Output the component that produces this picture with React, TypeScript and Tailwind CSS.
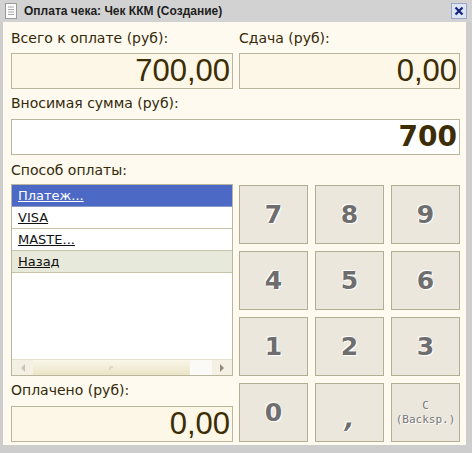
import React from "react";

const labelCls = "text-[14px] leading-[16px] text-[#33290a] font-['DejaVu_Sans',Verdana,sans-serif]";
const boxCls =
  "h-[36px] border border-[#bab59d] bg-[#fcf7e6] flex items-center justify-end pr-[2px] text-[#3c2d06] text-[31px] font-['Liberation_Sans',Arial,sans-serif]";

const methods = [
  { name: "Платеж...", selected: true },
  { name: "VISA" },
  { name: "MASTE..." },
  { name: "Назад", back: true },
];

const keys = ["7", "8", "9", "4", "5", "6", "1", "2", "3", "0", ","];

function DocIcon() {
  return (
    <svg width="14" height="16" viewBox="0 0 14 16">
      <rect x="1.5" y="0.5" width="11" height="15" fill="#fbfbfb" stroke="#9a9a9a" />
      <line x1="4" y1="4" x2="10" y2="4" stroke="#a8a8a8" />
      <line x1="4" y1="6.5" x2="10" y2="6.5" stroke="#a8a8a8" />
      <line x1="4" y1="9" x2="10" y2="9" stroke="#a8a8a8" />
      <line x1="4" y1="11.5" x2="10" y2="11.5" stroke="#a8a8a8" />
    </svg>
  );
}

function PaymentList() {
  return (
    <div className="h-[192px] border border-[#bab59d] bg-white flex flex-col">
      <div className="flex-1">
        {methods.map(m => (
          <div
            key={m.name}
            className={`h-[22px] flex items-center px-[6px] border-b text-[13px] underline font-['DejaVu_Sans',Verdana,sans-serif] ${
              m.selected
                ? "bg-[#4c69c6] text-white border-[#8a99c8]"
                : m.back
                ? "bg-[#e7eadb] text-[#111] border-[#c8c4ab]"
                : "bg-white text-[#111] border-[#c8c4ab]"
            }`}
          >
            {m.name}
          </div>
        ))}
      </div>
      {/* horizontal scrollbar */}
      <div className="h-[16px] flex bg-[#f4f1e4] border-t border-[#e4e0cc]">
        <div className="w-[21px] flex items-center justify-center">
          <svg width="6" height="8" viewBox="0 0 6 8">
            <path d="M5 0 L1 4 L5 8 Z" fill="#c9c5b6" />
          </svg>
        </div>
        <div className="w-[157px] bg-gradient-to-b from-[#faf7ea] to-[#ebe4c6] flex items-center justify-center">
          <svg width="6" height="6" viewBox="0 0 6 6">
            <path d="M1 5 L1 2 L4 2" stroke="#cdc7af" fill="none" />
          </svg>
        </div>
        <div className="flex-1 bg-[#fbfaf6]" />
        <div className="w-[20px] flex items-center justify-center">
          <svg width="6" height="8" viewBox="0 0 6 8">
            <path d="M1 0 L5 4 L1 8 Z" fill="#8f8b7e" />
          </svg>
        </div>
      </div>
    </div>
  );
}

function Keypad() {
  return (
    <div className="mt-[1px] grid grid-cols-3 grid-rows-4 gap-[7px] h-[257px]">
      {keys.map(k => (
        <button
          key={k}
          className="border border-[#b3ad93] bg-[#ebe7dd] text-[#6e6e6e] font-bold text-[25px] font-['DejaVu_Sans',Verdana,sans-serif] [text-shadow:1px_1px_0_#fff,-1px_-1px_0_#fff]"
        >
          {k === "," ? <span className="relative top-[6px] italic">,</span> : k}
        </button>
      ))}
      <button className="border border-[#b3ad93] bg-[#ebe7dd] text-[#777] text-[11px] leading-[14px] font-['DejaVu_Sans_Mono',monospace] [text-shadow:1px_1px_0_#fff]">
        C
        <br />
        (Backsp.)
      </button>
    </div>
  );
}

export default function App() {
  return (
    <div className="w-[472px] h-[453px] flex flex-col bg-[#d4d4d4] overflow-hidden">
      {/* Title bar */}
      <div className="h-[22px] flex items-center pl-[4px] pr-[5px] bg-[#d2d2d2]">
        <DocIcon />
        <span className="ml-[6px] text-[12px] font-bold text-[#1e1e1e] font-['Liberation_Sans',Arial,sans-serif]">
          Оплата чека: Чек ККМ (Создание)
        </span>
        <div className="ml-auto w-[16px] h-[16px] border border-[#9aa6c4] bg-[#dde4f3] flex items-center justify-center">
          <svg width="10" height="10" viewBox="0 0 10 10">
            <path d="M1.5 1.5 L8.5 8.5 M8.5 1.5 L1.5 8.5" stroke="#13267a" strokeWidth="2.2" />
          </svg>
        </div>
      </div>

      {/* Body */}
      <div className="flex-1 border-l-[3px] border-r-[6px] border-b-[8px] border-[#cdcdcd] bg-[#fefaef] pl-[8px] pr-[6px] pt-[8px]">
        <div className="grid grid-cols-[222px_221px] gap-x-[6px]">
          <div className={labelCls}>Всего к оплате (руб):</div>
          <div className={labelCls}>Сдача (руб):</div>
          <div className={`${boxCls} mt-[7px]`}>700,00</div>
          <div className={`${boxCls} mt-[7px]`}>0,00</div>
        </div>

        <div className={`${labelCls} mt-[6px]`}>Вносимая сумма (руб):</div>
        <div className="mt-[8px] w-[449px] h-[36px] border border-[#bab59d] bg-white flex items-center justify-end pr-[2px] text-[#3c2d06] text-[28px] font-bold font-['DejaVu_Sans',Verdana,sans-serif]">
          700
        </div>

        <div className={`${labelCls} mt-[7px]`}>Способ оплаты:</div>

        <div className="mt-[6px] grid grid-cols-[222px_221px] gap-x-[6px]">
          <div className="flex flex-col">
            <PaymentList />
            <div className={`${labelCls} mt-[6px]`}>Оплачено (руб):</div>
            <div className={`${boxCls} mt-[8px] h-[35px]`}>0,00</div>
          </div>
          <Keypad />
        </div>
      </div>
    </div>
  );
}
